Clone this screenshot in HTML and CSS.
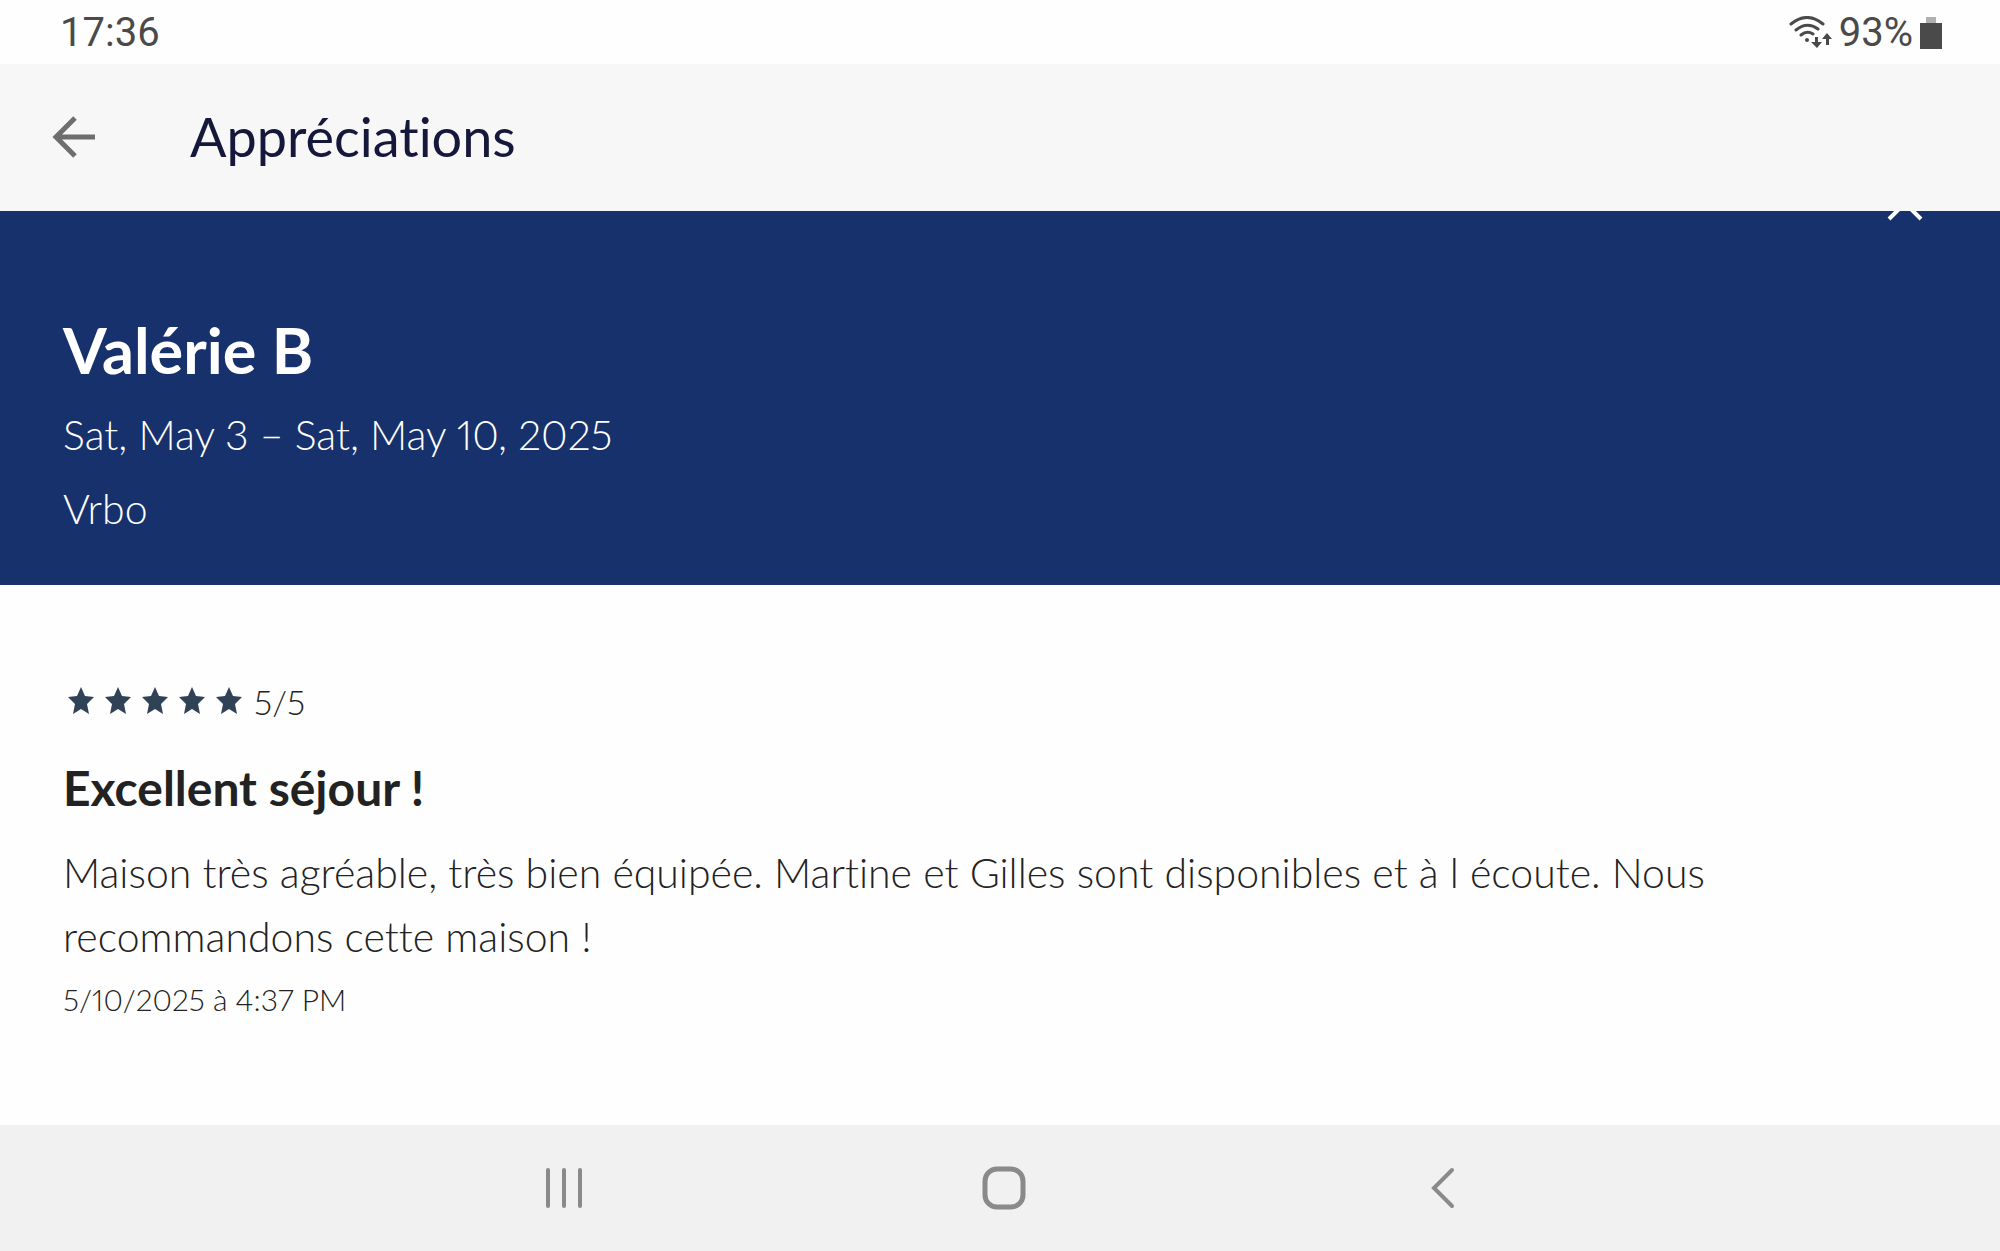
FILE: index.html
```html
<!DOCTYPE html>
<html lang="fr">
<head>
<meta charset="utf-8">
<meta name="viewport" content="width=device-width, initial-scale=1">
<title>Appréciations</title>
<link rel="stylesheet" href="styles.css">
</head>
<body>
<div class="status">
  <span>17:36</span>
  <div class="status-right">
    <svg class="wifi" viewBox="0 0 44 34" aria-hidden="true">
      <g fill="none" stroke="#4a4a4a" stroke-width="3" stroke-linecap="round">
        <path d="M3 8Q19-5 35 8M8 14Q19 5 30 13M13 19Q19 14 25 18"/>
      </g>
      <g fill="#4a4a4a">
        <circle cx="19" cy="24" r="2"/>
        <path d="M27 21h3v5h4l-5 6-6-6h4zM38 29h3v-6h3l-5-6-5 6h4z"/>
      </g>
    </svg>
    <span>93%</span>
    <svg class="battery" viewBox="0 0 22 34" aria-hidden="true">
      <path d="M6 1h10v7H6z" fill="#b0b0b0"/><path d="M0 7h22v26H0z" fill="#4a4a4a"/>
    </svg>
  </div>
</div>
<header class="appbar">
  <button class="back" type="button" aria-label="Retour">
    <svg viewBox="0 0 44 44"><path d="M43 22H4M23 3L4 22l19 19" fill="none" stroke="#6e6e6e" stroke-width="5"/></svg>
  </button>
  <h1>Appréciations</h1>
</header>
<main>
  <section class="guest">
    <button class="collapse" type="button" aria-label="Fermer">
      <svg viewBox="0 0 36 22"><path d="M2 20L18 4l16 16" fill="none" stroke="#fff" stroke-width="4"/></svg>
    </button>
    <h2>Valérie B</h2>
    <p>Sat, May 3 – Sat, May 10, 2025</p>
    <p>Vrbo</p>
  </section>
  <article class="review">
    <div class="rating">
      <svg class="stars" viewBox="0 0 185 37" aria-hidden="true">
        <defs><path id="star" d="M18 3l4 9 9 1-7 7 2 10-8-5-8 5 2-10-7-7 9-1z"/></defs>
        <g fill="#2f4256"><use href="#star"/><use href="#star" x="37"/><use href="#star" x="74"/><use href="#star" x="111"/><use href="#star" x="148"/></g>
      </svg>
      <span>5/5</span>
    </div>
    <h3>Excellent séjour !</h3>
    <p class="comment">Maison très agréable, très bien équipée. Martine et Gilles sont disponibles et à l écoute. Nous recommandons cette maison !</p>
    <time class="date">5/10/2025 à 4:37 PM</time>
  </article>
</main>
<nav class="navbar" aria-label="Système">
  <button type="button" aria-label="Applications récentes"><svg viewBox="0 0 44 44"><path d="M5 4v36M21 4v36M37 4v36" fill="none" stroke="#8a8a8a" stroke-width="4" stroke-linecap="round"/></svg></button>
  <button type="button" aria-label="Accueil"><svg viewBox="0 0 44 44"><rect x="3" y="3" width="38" height="38" rx="12" fill="none" stroke="#8a8a8a" stroke-width="5"/></svg></button>
  <button type="button" aria-label="Précédent"><svg viewBox="0 0 44 44"><path d="M31 4L13 22l18 18" fill="none" stroke="#8a8a8a" stroke-width="4" stroke-linecap="round"/></svg></button>
</nav>
</body>
</html>
```
FILE: styles.css
```css
* { box-sizing: border-box; }
body {
  margin: 0;
  min-height: 100vh;
  display: flex;
  flex-direction: column;
  background: #fefefe;
  color: #222;
  font-family: Lato, "Open Sans", sans-serif;
  font-variant-ligatures: none;
}
h1, h2, h3, p { margin: 0; }
button { padding: 0; border: 0; background: none; }
svg { display: block; }
main { font-variant-numeric: proportional-nums; }

.status {
  display: flex;
  align-items: center;
  justify-content: space-between;
  height: 64px;
  padding: 2px 58px 0 60px;
  color: #4a4a4a;
  font-family: Roboto, sans-serif;
  font-size: 40px;
  line-height: 62px;
}
.status-right { display: flex; align-items: center; gap: 7px; }
.wifi { width: 44px; height: 34px; }
.battery { width: 22px; height: 34px; }

.appbar {
  position: relative;
  z-index: 1;
  display: flex;
  align-items: center;
  gap: 94px;
  height: 147px;
  padding: 0 52px 2px;
  background: #f7f7f7;
}
.back svg { width: 44px; height: 44px; }
h1 { color: #15183a; font-size: 54px; font-weight: 400; line-height: 64px; }

.guest {
  position: relative;
  height: 374px;
  padding: 102px 63px 0;
  background: #16316c;
  color: #fff;
  font-weight: 300;
}
.collapse { position: absolute; top: -12px; right: 77px; }
.collapse svg { width: 36px; height: 22px; }
h2 { margin-bottom: 16px; font-size: 63px; font-weight: 700; line-height: 74px; }
.guest p { margin-bottom: 10px; font-size: 41px; line-height: 64px; }

.review { padding: 95px 63px; font-weight: 300; }
.rating { display: flex; align-items: center; gap: 6px; font-size: 34px; line-height: 44px; }
.stars { width: 185px; height: 37px; }
h3 { margin: 32px 0 21px; font-size: 48px; font-weight: 700; line-height: 64px; }
.comment { font-size: 41px; line-height: 64px; }
.date { display: block; font-size: 30px; line-height: 60px; }

.navbar {
  display: flex;
  justify-content: center;
  gap: 395px;
  margin-top: auto;
  padding: 41px 0 41px 8px;
  background: #f1f1f1;
}
.navbar svg { width: 44px; height: 44px; }
```
